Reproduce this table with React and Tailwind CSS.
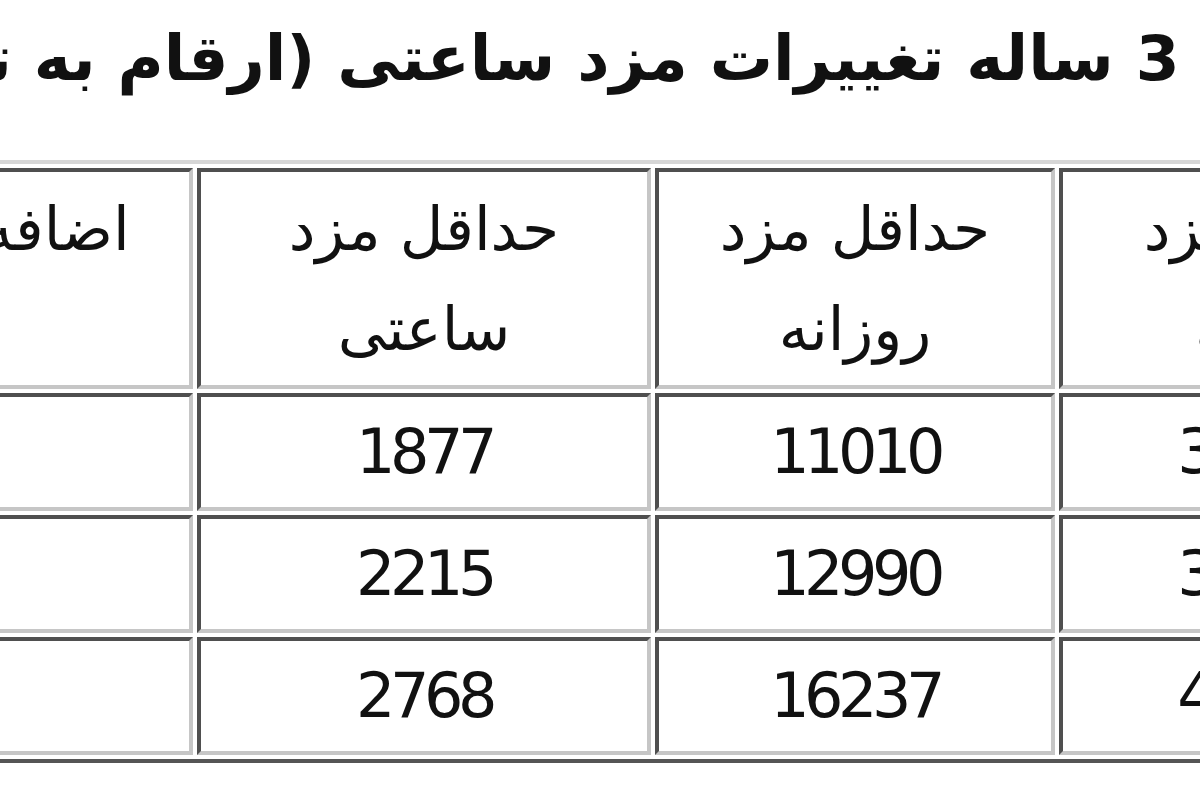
import React from "react";

const headers = [
  ["حداقل مزد", "ماهیانه"],
  ["حداقل مزد", "روزانه"],
  ["حداقل مزد", "ساعتی"],
  ["اضافه کار ساعتی", "\u00a0"],
];

const rows = [
  ["330300", "11010", "1877", "2628"],
  ["389700", "12990", "2215", "3101"],
  ["487110", "16237", "2768", "3875"],
];

const cell =
  "border-4 border-t-[#4f4f4f] border-l-[#4f4f4f] border-b-[#c6c6c6] border-r-[#c6c6c6] text-center align-middle p-0";

const widths = ["w-[440px]", "w-[400px]", "w-[454px]", "w-[560px]"];

const App = () => {
  return (
    <div
      className="w-[1200px] h-[800px] overflow-hidden bg-white text-[#111]"
      style={{ fontFamily: '"DejaVu Sans", sans-serif' }}
    >
      <div dir="rtl" className="ml-[-375px] w-[1882px] flex flex-col">
        <div className="h-[160px] pt-[20px]">
          <h1 className="-mr-[84px] text-[63px] font-bold leading-[78px] whitespace-nowrap">
            جدول ترکیب 3 ساله تغییرات مزد ساعتی (ارقام به تومان)
          </h1>
        </div>
        <table className="border-separate border-spacing-[4px] border-4 border-t-[#d6d6d6] border-r-[#d6d6d6] border-b-[#555555] border-l-[#555555] self-start">
          <thead>
            <tr>
              {headers.map((h, i) => (
                <th
                  key={i}
                  className={`${cell} ${widths[i]} h-[221px] font-normal text-[60px] leading-[100px] whitespace-nowrap`}
                >
                  <div>{h[0]}</div>
                  <div>{h[1]}</div>
                </th>
              ))}
            </tr>
          </thead>
          <tbody>
            {rows.map((r, ri) => (
              <tr key={ri}>
                {r.map((v, i) => (
                  <td
                    key={i}
                    className={`${cell} ${widths[i]} h-[118px] text-[62px] tracking-[-5.5px] leading-none`}
                  >
                    {v}
                  </td>
                ))}
              </tr>
            ))}
          </tbody>
        </table>
      </div>
    </div>
  );
};

export default App;
